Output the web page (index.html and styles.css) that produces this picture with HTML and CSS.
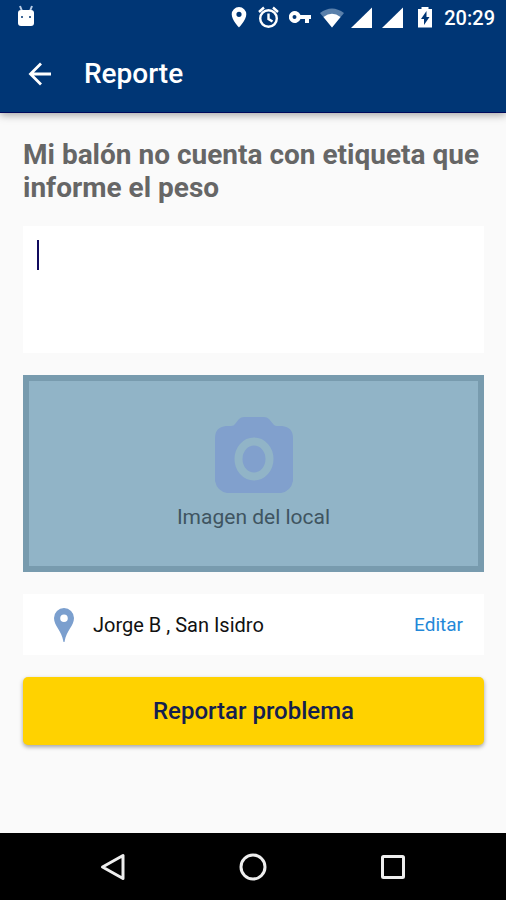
FILE: index.html
```html
<!DOCTYPE html>
<html lang="es">
<head>
<meta charset="utf-8">
<meta name="viewport" content="width=device-width, initial-scale=1">
<title>Reporte</title>
<link rel="stylesheet" href="styles.css">
</head>
<body>
<div class="screen">
  <header class="header">
    <div class="status">
      <svg class="status-icon" viewBox="0 0 24 24" aria-hidden="true">
        <path d="M5 1l2 5M17 1l-2 5" stroke="#b9cde6" stroke-width="2"/>
        <path d="M3 8Q3 5 6 5H16Q19 5 19 8V18Q19 21 16 21H6Q3 21 3 18Z" fill="#fff"/>
        <circle cx="7" cy="12" r="1" fill="#003675"/><circle cx="15" cy="12" r="1" fill="#003675"/>
      </svg>
      <div class="status-right">
        <svg class="status-icon" viewBox="0 0 24 24" aria-hidden="true"><path fill="#fff" fill-rule="evenodd" d="M12 2a7.300 7.300 0 0 0-7.300 7.300C4.700 15 12 22.500 12 22.500S19.300 15 19.300 9.300A7.300 7.300 0 0 0 12 2zm0 4.700a2.600 2.600 0 1 1 0 5.200 2.600 2.600 0 0 1 0-5.200z"/></svg>
        <svg class="status-icon" viewBox="0 0 24 24" aria-hidden="true"><g fill="none" stroke="#fff" stroke-width="2.400"><circle cx="10.500" cy="13.500" r="8.300"/><path d="M1 7l5-4.500M20 7l-5-4.500M10.500 8.500v5.500l4 2.500"/></g></svg>
        <svg class="status-icon" viewBox="0 0 24 24" aria-hidden="true"><path fill="#fff" fill-rule="evenodd" d="M11.500 10H22v4h-2v4h-4v-4h-4.500A6 6 0 1 1 11.500 10zM5.500 10a2 2 0 1 0 0 4 2 2 0 0 0 0-4z"/></svg>
        <svg class="status-icon" viewBox="0 0 24 24" aria-hidden="true"><path fill="#5a80ab" d="M0 8Q12-1 24 8L12 22.500z"/><path fill="#fff" d="M3.500 12Q12 5.500 20.500 12L12 22.500z"/></svg>
        <svg class="status-icon" viewBox="0 0 24 24" aria-hidden="true"><path fill="#fff" d="M21 2.500V23H0z"/></svg>
        <svg class="status-icon" viewBox="0 0 24 24" aria-hidden="true"><path fill="#fff" d="M21 2.500V23H0z"/></svg>
        <svg class="status-icon" viewBox="0 0 24 24" aria-hidden="true"><path fill="#fff" d="M8.500 2h7v2H19v18.500H5V4h3.500z"/><path fill="#003675" d="M13.500 6L8 14h3v6l5.500-8h-3z"/></svg>
        <time class="clock">20:29</time>
      </div>
    </div>
    <div class="toolbar">
      <button class="back" type="button" aria-label="Atrás">
        <svg class="back-icon" viewBox="0 0 24 24" aria-hidden="true"><path d="M13 1.500L2.500 12 13 22.500M2.500 12H23" fill="none" stroke="#fff" stroke-width="2.800"/></svg>
      </button>
      <h1 class="title">Reporte</h1>
    </div>
  </header>
  <main class="content">
    <label class="question" for="detail">Mi balón no cuenta con etiqueta que informe el peso</label>
    <div class="field">
      <textarea class="detail" id="detail"></textarea>
      <span class="caret" aria-hidden="true"></span>
    </div>
    <button class="photo" type="button">
      <svg class="camera" viewBox="0 0 78 76" aria-hidden="true">
        <path fill="#81a0cd" d="M29 0H49Q52 0 54 2L59 8Q60 9 62 9H67Q78 10 78 21V64Q76 74 66 76H12Q2 74 0 64V21Q0 10 11 9H16Q19 9 20 7L24 2Q26 0 29 0Z"/>
        <ellipse cx="39" cy="42" rx="15.500" ry="17.500" fill="none" stroke="#91b4c7" stroke-width="8"/>
      </svg>
      <span>Imagen del local</span>
    </button>
    <div class="place">
      <svg class="pin" viewBox="0 0 20 34" aria-hidden="true"><path fill="#7b9fce" fill-rule="evenodd" d="M10 0A10 10 0 0 0 0 10C0 18 7.500 22 9.500 34H10.500C12.500 22 20 18 20 10A10 10 0 0 0 10 0zM10 6.500a3.800 3.800 0 1 1 0 7.600 3.800 3.800 0 0 1 0-7.600z"/></svg>
      <span class="place-name">Jorge B , San Isidro</span>
      <a class="edit" href="#">Editar</a>
    </div>
    <button class="submit" type="button">Reportar problema</button>
  </main>
  <nav class="navbar" aria-label="Sistema">
    <button class="nav-button" type="button" aria-label="Volver"><svg class="nav-icon" viewBox="0 0 28 28" aria-hidden="true"><path d="M24 2.500V25.500L3.500 14z"/></svg></button>
    <button class="nav-button" type="button" aria-label="Inicio"><svg class="nav-icon" viewBox="0 0 28 28" aria-hidden="true"><circle cx="14" cy="14" r="12"/></svg></button>
    <button class="nav-button" type="button" aria-label="Recientes"><svg class="nav-icon" viewBox="0 0 28 28" aria-hidden="true"><rect x="3.500" y="3.500" width="21" height="21" rx="1"/></svg></button>
  </nav>
</div>
</body>
</html>
```
FILE: styles.css
```css
* {
  box-sizing: border-box;
}

body {
  margin: 0;
  background: #fafafa;
  font-family: Roboto, "Liberation Sans", sans-serif;
}

button {
  padding: 0;
  border: 0;
  background: none;
  font-family: inherit;
  cursor: pointer;
}

svg {
  display: block;
  flex: none;
}

.screen {
  display: flex;
  flex-direction: column;
  min-height: 100vh;
}

.header {
  background: #003675;
  color: #fff;
  border-bottom: 1px solid #000a5c;
  box-shadow: 0 2px 8px rgba(0, 0, 0, 0.35);
}

.status {
  display: flex;
  align-items: center;
  justify-content: space-between;
  height: 36px;
  padding: 0 11px 0 15px;
}

.status-right {
  display: flex;
  align-items: center;
  gap: 7px;
}

.status-icon {
  width: 24px;
  height: 24px;
  margin-bottom: 2px;
}

.clock {
  font-size: 20px;
  font-weight: 500;
  line-height: 24px;
}

.toolbar {
  display: flex;
  align-items: center;
  gap: 32px;
  height: 76px;
  padding: 0 28px;
}

.back-icon {
  width: 24px;
  height: 24px;
}

.title {
  margin: 0;
  font-size: 28px;
  font-weight: 500;
  line-height: 36px;
}

.content {
  display: flex;
  flex: 1;
  flex-direction: column;
  gap: 22px;
  padding: 25px 22px 24px 23px;
}

.question {
  color: #666;
  font-size: 28px;
  font-weight: 700;
  line-height: 33px;
}

.field {
  position: relative;
  display: flex;
}

.detail {
  width: 100%;
  height: 127px;
  padding: 12px 14px;
  border: 0;
  outline: 0;
  resize: none;
  background: #fff;
  color: #111;
  font: 24px/32px Roboto, sans-serif;
}

.caret {
  position: absolute;
  top: 14px;
  left: 14px;
  width: 2px;
  height: 30px;
  background: #100a5e;
}

.detail:focus + .caret {
  display: none;
}

.photo {
  display: flex;
  flex-direction: column;
  align-items: center;
  justify-content: center;
  gap: 10px;
  height: 197px;
  border: 6px solid #789bae;
  background: #91b4c7;
  color: #3f5561;
  font-size: 21px;
  line-height: 28px;
}

.camera {
  width: 78px;
  height: 76px;
}

.place {
  display: flex;
  align-items: center;
  height: 61px;
  padding: 0 21px 0 31px;
  background: #fff;
  font-size: 20px;
  line-height: 24px;
}

.pin {
  width: 20px;
  height: 34px;
}

.place-name {
  flex: 1;
  margin-left: 19px;
  color: #111;
}

.edit {
  color: #2488d8;
  font-size: 19px;
  text-decoration: none;
}

.submit {
  height: 68px;
  border-radius: 5px;
  background: #ffd200;
  box-shadow: 0 2px 4px rgba(0, 0, 0, 0.35);
  color: #14204f;
  font-size: 24px;
  font-weight: 500;
}

.navbar {
  display: flex;
  justify-content: center;
  gap: 112px;
  height: 67px;
  background: #000;
}

.nav-button {
  display: flex;
  align-items: center;
}

.nav-icon {
  width: 28px;
  height: 28px;
  fill: none;
  stroke: #eee;
  stroke-width: 3;
  stroke-linejoin: round;
}
```
